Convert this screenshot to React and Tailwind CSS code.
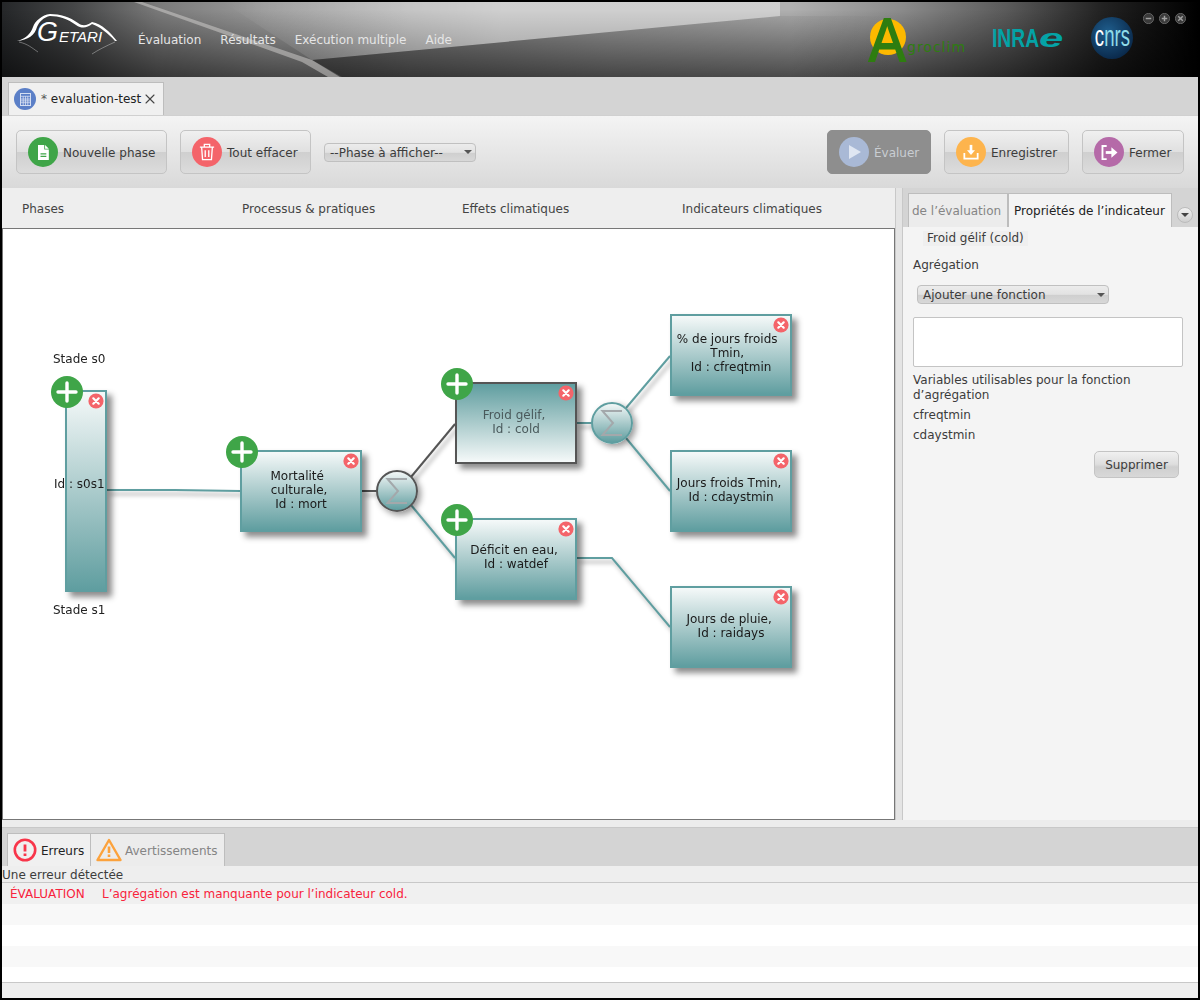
import React from 'react';
import { X } from 'lucide-react';

const FONT = "font-['DejaVu_Sans',sans-serif]";

const nodes = [
    { id: 'mort', x: 240, y: 450, h: 82, pb: 'pb-[3px]', plus: true, lines: ['Mortalité\u00a0\u00a0', 'culturale,\u00a0', 'Id : mort'] },
    { id: 'cold', x: 455, y: 382, h: 82, pb: 'pb-[3px]', plus: true, selected: true, lines: ['Froid gélif,\u00a0', 'Id : cold'] },
    { id: 'watdef', x: 455, y: 518, h: 82, pb: 'pb-[4px]', plus: true, lines: ['Déficit en eau,\u00a0', 'Id : watdef'] },
    { id: 'cfreqtmin', x: 670, y: 314, h: 82, pb: 'pb-[5px]', lines: ['% de jours froids\u00a0\u00a0', 'Tmin,\u00a0\u00a0', 'Id : cfreqtmin'] },
    { id: 'cdaystmin', x: 670, y: 450, h: 82, pb: 'pb-[3px]', lines: ['Jours froids Tmin,\u00a0', 'Id : cdaystmin'] },
    { id: 'raidays', x: 670, y: 586, h: 82, pb: 'pb-[3px]', lines: ['Jours de pluie,\u00a0', 'Id : raidays'] },
];

const wires = [
    { d: 'M107 490 L175 490 L240 491', c: '#5f9ea0' },
    { d: 'M362 491 L377 491', c: '#555555' },
    { d: 'M411 477 L455 424', c: '#555555' },
    { d: 'M411 505 L455 558', c: '#5f9ea0' },
    { d: 'M577 423 L592 423', c: '#5f9ea0' },
    { d: 'M626 408 L670 356', c: '#5f9ea0' },
    { d: 'M626 438 L670 491', c: '#5f9ea0' },
    { d: 'M577 558 L612 558 L670 627', c: '#5f9ea0' },
];

const CloseDot = () => (
    <svg viewBox="0 0 16 16" className="h-4 w-4">
        <circle cx="8" cy="8" r="7.6" fill="#f4646a" />
        <path d="M5.3 5.3 L10.7 10.7 M10.7 5.3 L5.3 10.7" stroke="#fff" strokeWidth="2.2" strokeLinecap="round" />
    </svg>
);

const PlusDot = () => (
    <svg viewBox="0 0 32 32" className="h-8 w-8">
        <circle cx="16" cy="16" r="16" fill="#3fa548" />
        <path d="M16 7 V25 M7 16 H25" stroke="#fff" strokeWidth="3.4" strokeLinecap="round" />
    </svg>
);

const Sigma = ({ x, y, dark }) => (
    <div
        style={{ left: x - 21, top: y - 21 }}
        className={`absolute h-[42px] w-[42px] rounded-full border-2 flex items-center justify-center shadow-[3px_3px_6px_rgba(0,0,0,0.4)] bg-gradient-to-b from-[#f2f7f7] to-[#5f9ea0] ${dark ? 'border-[#555555]' : 'border-[#5f9ea0]'}`}
    >
        <svg viewBox="0 0 24 30" className="h-[30px] w-[24px]">
            <path d="M22 3 H2.5 L13 15 L2.5 27 H22" fill="none" stroke="#a3a8ab" strokeWidth="2" />
        </svg>
    </div>
);

const Node = ({ node }) => (
    <div style={{ left: node.x, top: node.y, height: node.h }} className="absolute w-[122px]">
        <div
            className={`h-full w-full border-2 flex flex-col items-center justify-center text-center text-[12px] leading-[14px] shadow-[5px_5px_6px_rgba(0,0,0,0.45)] ${node.pb} ${
                node.selected
                    ? 'border-[#555555] bg-gradient-to-t from-[#f5f9f9] to-[#5f9ea0] text-[#4a5a5c]'
                    : 'border-[#5f9ea0] bg-gradient-to-b from-[#f5f9f9] to-[#5f9ea0] text-[#1a1a1a]'
            }`}
        >
            {node.lines.map((l) => (
                <span key={l} className="whitespace-pre">{l}</span>
            ))}
        </div>
        <div className="absolute right-[3px] top-[3px]"><CloseDot /></div>
        {node.plus && <div className="absolute -left-[14px] -top-[14px]"><PlusDot /></div>}
    </div>
);

const ToolButton = ({ label, color, icon, disabled, width }) => (
    <button
        style={{ width }}
        className={`h-[44px] rounded-[5px] border flex items-center pl-[11px] gap-[5px] text-[12px] ${
            disabled
                ? 'border-[#8e8e8e] bg-[#8e8e8e] text-[#c9cdd2]'
                : 'border-[#c4c4c4] bg-[linear-gradient(#f0f0f0,#e0e0e0_49%,#cfcfcf_50%,#dcdcdc)] text-[#3c3c3c]'
        }`}
    >
        <span style={{ backgroundColor: color }} className="h-[30px] w-[30px] rounded-full flex items-center justify-center shrink-0">{icon}</span>
        <span className="pt-[1px]">{label}</span>
    </button>
);

const Combo = ({ label, className }) => (
    <div className={`h-[19px] rounded-[4px] border border-[#c0c0c0] bg-[linear-gradient(#ececec,#e2e2e2_49%,#cfcfcf_55%,#d8d8d8)] flex items-center justify-between pl-[5px] pr-[3px] text-[12px] text-[#3c3c3c] ${className}`}>
        <span className="pt-[1px]">{label}</span>
        <span className="border-x-[4px] border-t-[4px] border-x-transparent border-t-[#555555]" />
    </div>
);

const Header = () => (
    <header className="relative h-[75px] shrink-0 overflow-hidden bg-[linear-gradient(90deg,#252729_0%,#454647_6%,#7a7a7a_13%,#9a9a9a_22%,#b0b0b0_34%,#b0b0b0_66%,#8c8c8c_75%,#5a5a5a_84%,#222222_92%,#000000_100%)] flex items-center">
        <svg className="absolute inset-0" width="1198" height="75" viewBox="0 0 1198 75">
            <defs>
                <linearGradient id="shade" x1="0" y1="0" x2="0" y2="1">
                    <stop offset="0.1" stopColor="#000" stopOpacity="0" />
                    <stop offset="1" stopColor="#000" stopOpacity="0.55" />
                </linearGradient>
                <linearGradient id="topLight" gradientUnits="userSpaceOnUse" x1="221" y1="0" x2="500" y2="0">
                    <stop offset="0" stopColor="#fff" stopOpacity="0" />
                    <stop offset="1" stopColor="#fff" stopOpacity="0.4" />
                </linearGradient>
                <linearGradient id="dark" gradientUnits="userSpaceOnUse" x1="310" y1="0" x2="900" y2="0">
                    <stop offset="0" stopColor="#000" stopOpacity="0.4" />
                    <stop offset="0.5" stopColor="#000" stopOpacity="0.14" />
                    <stop offset="1" stopColor="#000" stopOpacity="0" />
                </linearGradient>
            </defs>
            <rect width="1198" height="75" fill="url(#shade)" />
            <path d="M221 0 L778 0 L778 14 L310 58 Z" fill="url(#topLight)" />
            <path d="M310 58 L778 14 L900 14 L900 75 L340 75 Z" fill="url(#dark)" />
            <path d="M140 0 L310 58 L338 75 L326 75 L300 60 L132 0 Z" fill="#d6d4d2" opacity="0.5" />
        </svg>
        <div className="relative w-[136px] h-full shrink-0">
            <svg className="absolute left-0 top-0" width="136" height="75" viewBox="0 0 136 75">
                <path d="M15 39 C24 37 29 31 31 25 C33 19 40 13 48 12 C58 12 68 15 76 21 C81 25 86 23 90 20 C100 22 108 30 115 39 L113 39 C106 31 98 25 90 22 C85 26 80 27 74 23 C66 17 57 14 48 14 C42 15 37 20 35 25 C33 33 26 38 15 39 Z" fill="#ffffff" />
                <path d="M17 40 C26 42 30 46 36 50 M113 40 C104 44 96 48 90 52" fill="none" stroke="#ffffff" strokeOpacity="0.35" strokeWidth="1" />
            </svg>
            <span className="absolute left-[35px] top-[13px] text-[27px] leading-[34px] italic text-white font-['Liberation_Sans',sans-serif]">G</span>
            <span className="absolute left-[57px] top-[26px] text-[15px] leading-[18px] italic text-white font-['Liberation_Sans',sans-serif]">ETARI</span>
        </div>
        <nav className="relative flex gap-[19px] text-[12px] text-[#e6e6e6]">
            <span>Évaluation</span>
            <span>Résultats</span>
            <span>Exécution multiple</span>
            <span>Aide</span>
        </nav>
        <div className="relative ml-auto flex items-center pr-[65px] -mt-[4px]">
            <div className="relative w-[108px] h-[50px]">
                <span className="absolute left-[1px] top-[6px] h-[36px] w-[36px] rounded-full bg-[#fdb900]" />
                <span className="absolute left-[0px] -top-[2px] text-[62px] leading-[58px] text-[#2e7d10] font-['Liberation_Sans',sans-serif] inline-block scale-x-[0.88] origin-left [-webkit-text-stroke:2px_#2e7d10]">A</span>
                <span className="absolute left-[38px] top-[25px] text-[14px] leading-[18px] text-[#2e7d10] tracking-[1px]">groclim</span>
            </div>
            <div className="ml-[15px] w-[84px] flex items-center text-[#04a3a6] text-[25px] leading-[30px] font-bold font-['Liberation_Sans',sans-serif] whitespace-nowrap">
                <span className="w-[47px] inline-block scale-x-[0.77] origin-left">INRA</span>
                <span className="inline-block italic scale-x-[1.75] origin-left">e</span>
            </div>
            <div className="ml-[15px] h-[42px] w-[42px] rounded-full bg-[radial-gradient(circle_at_40%_35%,#1f5d8c,#0a2a4c_75%)] flex items-center justify-center font-['Liberation_Sans',sans-serif]">
                <span className="inline-block scale-x-[0.64] text-[29px] leading-none -mt-[3px] text-[#8fdbe8]"><span className="text-white">c</span>nrs</span>
            </div>
        </div>
        <div className="absolute right-[12px] top-[11px] flex gap-[5px]">
            {['M3 6 H9', 'M3 6 H9 M6 3 V9', 'M3.5 3.5 L8.5 8.5 M8.5 3.5 L3.5 8.5'].map((d) => (
                <svg key={d} viewBox="0 0 12 12" className="h-[11px] w-[11px]">
                    <circle cx="6" cy="6" r="5.6" fill="#3a3a3a" stroke="#777777" strokeWidth="0.8" />
                    <path d={d} stroke="#a0a0a0" strokeWidth="1.6" />
                </svg>
            ))}
        </div>
    </header>
);

const CalcIcon = () => (
    <span className="h-[22px] w-[22px] rounded-full bg-[#5b7fc7] flex items-center justify-center shrink-0">
        <svg viewBox="0 0 12 14" className="h-[13px] w-[11px]" fill="none" stroke="#dfe6f5" strokeWidth="1">
            <rect x="0.5" y="0.5" width="11" height="13" />
            <path d="M0.5 3.5 H11.5 M0.5 6.5 H11.5 M0.5 8.5 H11.5 M0.5 10.5 H11.5 M3.5 3.5 V13.5 M6 3.5 V13.5 M8.5 3.5 V13.5" strokeWidth="0.8" />
        </svg>
    </span>
);

const Toolbar = () => (
    <div className="h-[72px] shrink-0 bg-[linear-gradient(#f4f4f4,#d9d9d9)] flex items-center pl-[14px] pr-[14px]">
        <ToolButton
            label="Nouvelle phase"
            color="#3fa548"
            width={151}
            icon={
                <svg viewBox="0 0 14 18" className="h-[15px] w-[12px]">
                    <path d="M1 0 H8.5 V5.5 H14 V18 H1 Z M9.5 0 L14 4.5 H9.5 Z" fill="#fff" />
                    <path d="M4 10.5 H11 M4 13.5 H11" stroke="#3fa548" strokeWidth="1.5" />
                </svg>
            }
        />
        <div className="w-[13px]" />
        <ToolButton
            label="Tout effacer"
            color="#f4646a"
            width={131}
            icon={
                <svg viewBox="0 0 18 20" className="h-[18px] w-[16px]" fill="none" stroke="#fff" strokeWidth="1.5">
                    <path d="M1 4.5 H17 M6 4 V1.5 H12 V4 M3 5 L4 18.5 H14 L15 5 M7 8 V15.5 M11 8 V15.5" />
                </svg>
            }
        />
        <Combo label="--Phase à afficher--" className="ml-[13px] w-[152px]" />
        <div className="ml-auto flex gap-[13px]">
            <ToolButton
                label="Évaluer"
                color="#a9b9d6"
                disabled
                width={104}
                icon={
                    <svg viewBox="0 0 14 14" className="h-[14px] w-[14px] ml-[2px]">
                        <path d="M1 0 L13 7 L1 14 Z" fill="#dfe6f2" />
                    </svg>
                }
            />
            <ToolButton
                label="Enregistrer"
                color="#fdb44d"
                width={125}
                icon={
                    <svg viewBox="0 0 18 18" className="h-[16px] w-[16px]" fill="none" stroke="#fff" strokeWidth="2">
                        <path d="M1.5 10 V16.5 H16.5 V10" />
                        <path d="M9 1 V9" strokeWidth="3" />
                        <path d="M4.5 7 H13.5 L9 12.5 Z" fill="#fff" stroke="none" />
                    </svg>
                }
            />
            <ToolButton
                label="Fermer"
                color="#b56aa8"
                width={102}
                icon={
                    <svg viewBox="0 0 18 16" className="h-[15px] w-[17px]" fill="none" stroke="#fff" strokeWidth="2">
                        <path d="M6 1 H1.5 V15 H6" />
                        <path d="M5 8 H12" strokeWidth="3" />
                        <path d="M11 2.5 L17.5 8 L11 13.5 Z" fill="#fff" stroke="none" />
                    </svg>
                }
            />
        </div>
    </div>
);

const Canvas = () => (
    <div className="relative flex-1 border border-[#777777] bg-white overflow-hidden">
        {/* coordinates below are page based, the wrapper cancels the canvas offset */}
        <div className="absolute -left-[3px] -top-[229px] h-[1000px] w-[1200px]">
            <svg className="absolute left-0 top-0" width="1200" height="1000" viewBox="0 0 1200 1000">
                <g className="blur-[2px]">
                    {wires.map((w) => (
                        <path key={w.d} d={w.d} transform="translate(3 4)" fill="none" stroke="#000" strokeOpacity="0.3" strokeWidth="2.5" />
                    ))}
                </g>
                {wires.map((w) => (
                    <path key={w.d} d={w.d} fill="none" stroke={w.c} strokeWidth="2" />
                ))}
            </svg>
            <span className="absolute left-[53px] top-[352px] text-[12px] leading-[14px] text-[#222222]">Stade s0</span>
            <div className="absolute left-[65px] top-[390px] h-[202px] w-[42px]">
                <div className="h-full w-full border-2 border-[#5f9ea0] bg-gradient-to-b from-[#f5f9f9] to-[#5f9ea0] shadow-[5px_5px_6px_rgba(0,0,0,0.45)]" />
                <span className="absolute -left-[11px] top-[87px] text-[12px] leading-[14px] whitespace-nowrap text-[#1a1a1a]">Id : s0s1</span>
                <div className="absolute left-[23px] top-[3px]"><CloseDot /></div>
                <div className="absolute -left-[14px] -top-[14px]"><PlusDot /></div>
            </div>
            <span className="absolute left-[53px] top-[603px] text-[12px] leading-[14px] text-[#222222]">Stade s1</span>
            {nodes.map((n) => <Node key={n.id} node={n} />)}
            <Sigma x={397} y={491} dark />
            <Sigma x={612} y={423} />
        </div>
    </div>
);

const SidePanel = () => (
    <aside className="w-[295px] shrink-0 flex flex-col bg-[#f4f4f4] text-[12px] text-[#3c3c3c]">
        <div className="h-[39px] shrink-0 bg-[#d4d4d4] flex items-end pl-[5px]">
            <div className="h-[34px] w-[100px] bg-[#ececec] border border-b-0 border-[#bdbdbd] flex items-center pl-[3px] pt-[1px] text-[#858585] whitespace-nowrap overflow-hidden">de l’évaluation</div>
            <div className="h-[34px] w-[164px] bg-[#f4f4f4] border border-b-0 border-[#bdbdbd] flex items-center pl-[5px] pt-[1px] text-[#222222] whitespace-nowrap">Propriétés de l’indicateur</div>
            <div className="ml-[5px] mb-[4px] h-[16px] w-[16px] rounded-full bg-[linear-gradient(#f2f2f2,#cfcfcf)] border border-[#bbbbbb] flex items-center justify-center">
                <span className="border-x-[4px] border-t-[4px] border-x-transparent border-t-[#444444]" />
            </div>
        </div>
        <div className="flex flex-col items-start pl-[10px] pr-[15px]">
            <span className="ml-[10px] h-[15px] px-[4px] bg-[#efefef] leading-[15px] mt-[4px]">Froid gélif (cold)</span>
            <span className="mt-[12px] leading-[15px]">Agrégation</span>
            <Combo label="Ajouter une fonction" className="ml-[4px] mt-[12px] w-[192px]" />
            <div className="mt-[13px] h-[50px] w-[270px] rounded-[2px] border border-[#c4c4c4] bg-white" />
            <p className="mt-[6px] leading-[15px]">Variables utilisables pour la fonction d’agrégation</p>
            <span className="mt-[5px] leading-[15px]">cfreqtmin</span>
            <span className="mt-[5px] leading-[15px]">cdaystmin</span>
            <button className="self-end mt-[8px] mr-[4px] h-[27px] w-[85px] rounded-[5px] border border-[#c4c4c4] bg-[linear-gradient(#f0f0f0,#dedede_49%,#cfcfcf_60%,#d8d8d8)] text-[#3c3c3c]">Supprimer</button>
        </div>
    </aside>
);

const BottomPanel = () => (
    <section className="h-[170px] shrink-0 flex flex-col text-[12px]">
        <div className="h-[38px] shrink-0 bg-[#d4d4d4] flex items-end pl-[5px]">
            <div className="h-[33px] w-[84px] bg-[#f0f0f0] border border-b-0 border-[#bdbdbd] flex items-center pl-[5px] gap-[4px] text-[#222222]">
                <svg viewBox="0 0 24 24" className="h-[24px] w-[24px]" fill="none">
                    <circle cx="12" cy="12" r="10.2" stroke="#f8354a" strokeWidth="2.6" />
                    <path d="M12 6.5 V13.5 M12 15.5 V18" stroke="#f8354a" strokeWidth="2.8" />
                </svg>
                <span className="pt-[1px]">Erreurs</span>
            </div>
            <div className="h-[33px] w-[134px] bg-[#ececec] border border-b-0 border-l-0 border-[#bdbdbd] flex items-center pl-[5px] gap-[3px] text-[#858585]">
                <svg viewBox="0 0 26 24" className="h-[24px] w-[26px]" fill="none">
                    <path d="M13 2 L24.5 22 H1.5 Z" stroke="#fca23c" strokeWidth="2.4" strokeLinejoin="round" />
                    <path d="M13 8.5 V15 M13 16.5 V19" stroke="#fca23c" strokeWidth="2.6" />
                </svg>
                <span className="pt-[1px]">Avertissements</span>
            </div>
        </div>
        <div className="h-[16px] shrink-0 bg-[#eeeeee] leading-[18px] text-[#3c3c3c]">Une erreur détectée</div>
        <div className="h-[101px] shrink-0 border-y border-[#c8c8c8] bg-white flex flex-col">
            <div className="h-[21px] shrink-0 bg-[#f0f0f0] flex items-center pl-[8px] text-[#f8233c] whitespace-pre">
                <span className="w-[92px]">ÉVALUATION</span>
                <span>L’agrégation est manquante pour l’indicateur cold.</span>
            </div>
            <div className="h-[21px] shrink-0 bg-[#f8f8f8]" />
            <div className="h-[21px] shrink-0 bg-white" />
            <div className="h-[21px] shrink-0 bg-[#f8f8f8]" />
        </div>
        <div className="flex-1 bg-[#eeeeee]" />
    </section>
);

export default function App() {
    return (
        <div className={`h-[1000px] w-[1200px] bg-black p-[2px] flex flex-col overflow-hidden ${FONT}`}>
            <Header />
            <div className="h-[39px] shrink-0 bg-[#d4d4d4] flex items-end pl-[6px] border-b border-[#d0d0d0]">
                <div className="h-[33px] w-[156px] bg-[#f0f0f0] border border-b-0 border-[#bdbdbd] flex items-center pl-[5px] gap-[5px] text-[12px] text-[#222222]">
                    <CalcIcon />
                    <span className="whitespace-nowrap"><span className="text-[#555555]">*</span> evaluation-test</span>
                    <X size={16} strokeWidth={1.6} className="-ml-[4px] text-[#444444]" />
                </div>
            </div>
            <Toolbar />
            <div className="flex-1 flex min-h-0">
                <div className="flex-1 flex flex-col bg-[#eeeeee] min-w-0">
                    <div className="h-[40px] shrink-0 grid grid-cols-[220px_220px_220px_220px] items-center pl-[20px] pt-[1px] text-[12px] text-[#444444]">
                        <span>Phases</span>
                        <span>Processus & pratiques</span>
                        <span>Effets climatiques</span>
                        <span>Indicateurs climatiques</span>
                    </div>
                    <div className="flex-1 flex flex-col min-h-0">
                        <Canvas />
                    </div>
                </div>
                <div className="w-[8px] shrink-0 bg-[#e4e4e4] border-x border-[#c8c8c8]" />
                <SidePanel />
            </div>
            <div className="h-[8px] shrink-0 bg-[#ececec] border-b border-[#c8c8c8]" />
            <BottomPanel />
        </div>
    );
}
